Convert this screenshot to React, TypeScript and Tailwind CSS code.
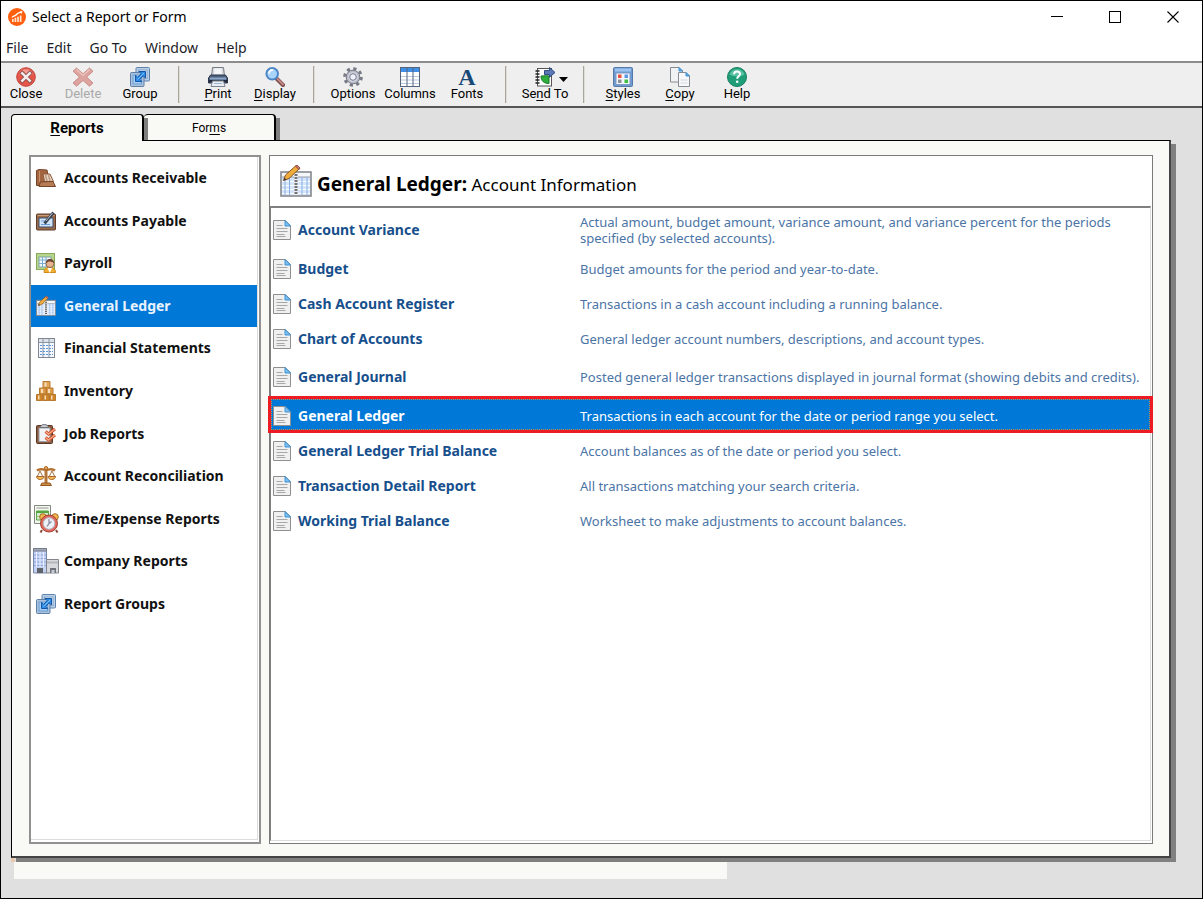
import { useState } from "react";
import type { ReactNode } from "react";
import clsx from "clsx";

interface Tool {
  id: string;
  label: ReactNode;
  icon: ReactNode;
  disabled?: boolean;
  arrow?: boolean;
}

interface Category {
  name: string;
  icon: ReactNode;
}

interface Report {
  name: string;
  description: string;
  tall?: boolean;
}

const u = (letter: string) => <span className="underline underline-offset-2">{letter}</span>;

/* ---------- icons ---------- */

function LogoIcon() {
  return (
    <svg width="18" height="18" viewBox="0 0 18 18" aria-hidden="true">
      <circle cx="9" cy="9" r="9" fill="#ff5f0f" />
      <path d="M4 9.500C5.500 7 7 8.500 8.500 6.500S11 5 13.500 4" fill="none" stroke="#fff" strokeWidth="1.300" />
      <path d="M11.500 3.200L14.500 3.300L13.500 6Z" fill="#fff" />
      <path d="M4 14v-3h1.700v3zM6.600 14v-4.200h1.700V14zM9.200 14V8.800h1.700V14zM11.800 14V7.500h1.700V14z" fill="#ffe3d0" />
    </svg>
  );
}

function CloseIcon() {
  return (
    <svg width="20" height="20" viewBox="0 0 20 20" aria-hidden="true">
      <circle cx="10" cy="10" r="9.300" fill="#e8564a" stroke="#c2453c" />
      <path d="M3 7a7.500 7.500 0 0 1 14 0c-4 2-10 2-14 0z" fill="#f29a8f" />
      <path d="M6.300 6.300l7.400 7.400M13.700 6.300l-7.400 7.400" stroke="#8d4a48" strokeWidth="4.400" strokeLinecap="square" />
      <path d="M6.300 6.300l7.400 7.400M13.700 6.300l-7.400 7.400" stroke="#f3eceb" strokeWidth="2.600" strokeLinecap="square" />
    </svg>
  );
}

function DeleteIcon() {
  return (
    <svg width="22" height="20" viewBox="0 0 22 20" aria-hidden="true">
      <path
        d="M4.500 1L11 6.700L17.500 1L21 4.200L14.600 10L21 16L17.500 19.200L11 13.500L4.500 19.200L1 16L7.400 10L1 4.200Z"
        fill="#dda49f"
        stroke="#c9908b"
      />
      <path d="M4.500 2.500L11 8.200L17.500 2.500" fill="none" stroke="#ebc2be" strokeWidth="1.500" />
    </svg>
  );
}

function GroupIcon() {
  return (
    <svg width="20" height="20" viewBox="0 0 20 20" aria-hidden="true">
      <rect x="6" y="0.500" width="13.500" height="13.500" rx="1" fill="#b9cfe6" stroke="#5f83ad" />
      <rect x="8.500" y="3" width="8.500" height="8.500" fill="#dcebfa" stroke="#86a6ca" />
      <rect x="0.500" y="5.500" width="13.500" height="14" rx="1" fill="#a9c3df" stroke="#5f7fa6" />
      <rect x="3" y="8" width="8.500" height="9" fill="#a5cff6" stroke="#6f9bcb" />
      <path d="M9 4.500h6.500V11l-2.200-2.200-3.500 3.500 2 2.200H5.500V8.200l2.200 2.200 3.500-3.700z" fill="#2f8fe8" stroke="#1556a5" />
      <path d="M7.500 12.500L14 6" stroke="#7cc4ff" />
    </svg>
  );
}

function PrintIcon() {
  return (
    <svg width="20" height="20" viewBox="0 0 20 20" aria-hidden="true">
      <path d="M4.500 0.500h11l1 8.500h-13z" fill="#d6d9dd" stroke="#777b82" />
      <path d="M6.500 1.500h7l.5 6H6z" fill="#f4f5f6" />
      <path d="M2.500 8h15l2 3v5h-19v-5z" fill="#4d5f78" stroke="#2c3850" />
      <path d="M2 10.500h16v2H2z" fill="#8ba7cb" />
      <path d="M0.500 13h19v2.500h-19z" fill="#232c3e" />
      <path d="M4.500 14h11l1.500 5.500H3z" fill="#e9edf2" stroke="#7b8594" />
      <path d="M6 16.500h8" stroke="#9fb7d6" />
    </svg>
  );
}

function DisplayIcon() {
  return (
    <svg width="20" height="20" viewBox="0 0 20 20" aria-hidden="true">
      <path d="M11.500 11.500l6.500 6.500" stroke="#7c4b4b" strokeWidth="4" strokeLinecap="round" />
      <path d="M12.500 12l5.500 5.500" stroke="#c58a86" strokeWidth="1.800" strokeLinecap="round" />
      <circle cx="7.200" cy="6.800" r="5.800" fill="#a9d5fb" stroke="#4f86c6" strokeWidth="2" />
      <path d="M3.800 6.500A3.800 3.800 0 0 1 8 3" fill="none" stroke="#fff" strokeWidth="1.700" />
    </svg>
  );
}

function OptionsIcon() {
  return (
    <svg width="20" height="20" viewBox="0 0 20 20" aria-hidden="true">
      <circle cx="10" cy="10" r="8.300" fill="none" stroke="#777a85" strokeWidth="3" strokeDasharray="3.200 3.320" />
      <circle cx="10" cy="10" r="6.800" fill="#b9bcc8" stroke="#777a85" />
      <circle cx="10" cy="10" r="4.800" fill="#d7d9e4" />
      <circle cx="10" cy="10" r="3.300" fill="#eef0fa" stroke="#74778a" />
    </svg>
  );
}

function ColumnsIcon() {
  return (
    <svg width="20" height="20" viewBox="0 0 20 20" aria-hidden="true">
      <rect x="0.500" y="0.500" width="19" height="19" fill="#fff" stroke="#55657e" />
      <rect x="1" y="1" width="18" height="4" fill="#3f8fe6" />
      <path d="M1 9.500h18M1 13h18M1 16.500h18" stroke="#b9cbe0" />
      <path d="M7 1v18M13 1v18" stroke="#55657e" />
    </svg>
  );
}

function FontsIcon() {
  return (
    <span aria-hidden="true" className="flex h-5 items-center font-['Liberation_Serif',serif] text-[24px] leading-5 font-bold text-[#184a78]">
      A
    </span>
  );
}

function SendToIcon() {
  return (
    <svg width="20" height="20" viewBox="0 0 20 20" aria-hidden="true">
      <rect x="2.500" y="1.500" width="14" height="17.500" fill="#fff" stroke="#555" />
      <path d="M0.500 4h4M0.500 7h4M0.500 10h4M0.500 13h4M0.500 16h4" stroke="#222" strokeWidth="1.600" />
      <path d="M6 9c3 0 5-.5 8 0v7.500C9 16.500 6 14 6 9z" fill="#2fae3e" stroke="#187a28" />
      <path d="M9.500 3.500h5V0.500L20 5.500l-5.500 4.700V7.500h-5z" fill="#5878b6" stroke="#2e4a80" />
    </svg>
  );
}

function StylesIcon() {
  return (
    <svg width="20" height="20" viewBox="0 0 20 20" aria-hidden="true">
      <rect x="0.500" y="0.500" width="19" height="19" rx="1" fill="#6d9ad0" stroke="#5679a8" />
      <rect x="2" y="1.500" width="16" height="3" fill="#9cc3f0" />
      <rect x="3" y="6" width="14" height="11.500" fill="#f3f6fb" stroke="#7d9cc6" />
      <rect x="5" y="7.500" width="3.500" height="3.500" fill="#e8503a" />
      <rect x="11.500" y="7.500" width="3.500" height="3.500" fill="#5b97e6" />
      <rect x="5" y="12.500" width="3.500" height="3.500" fill="#8b8f98" />
      <rect x="11.500" y="12.500" width="3.500" height="3.500" fill="#3fbf3f" />
    </svg>
  );
}

function CopyIcon() {
  return (
    <svg width="20" height="20" viewBox="0 0 20 20" aria-hidden="true">
      <path d="M0.500 0.500h8.500l3.500 3.500v11h-12z" fill="#f1f2f4" stroke="#888c92" />
      <path d="M9 0.500v3.500h3.500z" fill="#5fb2f2" stroke="#3f8fd0" />
      <path d="M8.500 5.500h7.500l3.500 3.500v10.500h-11z" fill="#f7f8fa" stroke="#888c92" />
      <path d="M16 5.500V9h3.500z" fill="#5fb2f2" stroke="#3f8fd0" />
      <path d="M10.500 13h7M10.500 16h7" stroke="#d4d6da" />
    </svg>
  );
}

function HelpIcon() {
  return (
    <svg width="20" height="20" viewBox="0 0 20 20" aria-hidden="true">
      <circle cx="10" cy="10" r="9.500" fill="#1f9e78" stroke="#187d60" />
      <path d="M2.500 7.500a8 8 0 0 1 15 0c-4 2.500-11 2.500-15 0z" fill="#58c3a2" />
      <path d="M7 7.300C7 5.300 8.400 4.500 10 4.500s3 1 3 2.600c0 2.200-2.800 2.300-2.800 4.700" fill="none" stroke="#fff" strokeWidth="2" />
      <circle cx="10.200" cy="14.800" r="1.300" fill="#fff" />
    </svg>
  );
}

function ReceivableIcon() {
  return (
    <svg width="20" height="18" viewBox="0 0 20 18" aria-hidden="true">
      <path d="M0.500 1.500L3 0.500l8 .5 1 5-2 10.500H0.500z" fill="#a5663f" stroke="#75452a" />
      <path d="M3.500 2v11" stroke="#c9936d" />
      <path d="M7 5h7l3.500 7.500h-9z" fill="#e9d2bd" stroke="#8a5a3c" />
      <path d="M9 7h1.500M12 7h1.500M9.500 9h1.500M12.500 9h1.500M10 11h1.500M13 11h1.500" stroke="#8a5f45" />
      <path d="M4.500 13L17 12.500l2.500 5H3z" fill="#b97d55" stroke="#75452a" />
    </svg>
  );
}

function PayableIcon() {
  return (
    <svg width="20" height="20" viewBox="0 0 20 20" aria-hidden="true">
      <rect x="0.500" y="3" width="19" height="16" rx="1" fill="#9a6a4b" stroke="#5f3d2a" />
      <path d="M1.500 4.500h17" stroke="#c99c7c" />
      <rect x="3" y="7" width="14" height="9" fill="#d3e4f9" stroke="#39506f" />
      <path d="M5 10h4M5 13.500h9" stroke="#6b9be0" />
      <path d="M8.500 12.500L17.500 1.500" stroke="#3a4554" strokeWidth="2.800" />
      <path d="M10 10L16.500 2" stroke="#b4bfce" />
    </svg>
  );
}

function PayrollIcon() {
  return (
    <svg width="20" height="20" viewBox="0 0 20 20" aria-hidden="true">
      <rect x="0.500" y="0.500" width="18" height="16" fill="#b8d58c" stroke="#86a95c" />
      <rect x="3" y="4" width="12" height="10" fill="#f0f7ff" stroke="#7fa3a0" />
      <path d="M3 7h12M3 10.500h12M6.500 4v10M10 4v10" stroke="#7eaed0" />
      <path d="M8 19.500c0-4 2.500-5 5.500-5s6 1 6 5z" fill="#f2ae2e" stroke="#cf8a1c" />
      <path d="M11.500 15l2.300 5 2.200-5z" fill="#fff" />
      <circle cx="14" cy="10.500" r="4" fill="#e8b48f" stroke="#96684a" />
      <path d="M9.800 10.500c0-6 8.400-6 8.400 0-1.500-2.500-6-3-8.400 0z" fill="#6d4433" />
    </svg>
  );
}

function LedgerIcon({ size = 20 }: { size?: number }) {
  return (
    <svg width={size} height={size} viewBox="0 0 32 32" aria-hidden="true">
      <rect x="1" y="7" width="30" height="24" fill="#f5f6f8" stroke="#85888f" strokeWidth="1.600" />
      <path d="M2 12h12v18H2zM18 12h12v18H18z" fill="#d3e4fb" />
      <path d="M2 12h28" stroke="#999da5" />
      <path d="M2 16.500h28M2 20.500h28M2 24.500h28M2 28.500h28" stroke="#fff" />
      <path d="M5 12v18M9.500 12v18M22 12v18M27 12v18" stroke="#86aee2" />
      <rect x="14" y="8" width="4" height="22" fill="#eceef0" />
      <path d="M14.500 10h3M14.500 13h3M14.500 16h3M14.500 19h3M14.500 22h3M14.500 25h3M14.500 28h3" stroke="#4a4c52" strokeWidth="1.600" />
      <path d="M3.500 15.500L5.500 10 15.500 1l3.500 3L9 13.500z" fill="#f0ab3d" stroke="#875620" />
      <path d="M15.500 1L17 0l3 3-1 1.500z" fill="#e4807a" stroke="#8c4c46" />
      <path d="M3.500 15.500l1-2.800 1.800 1.700z" fill="#333" />
    </svg>
  );
}

function StatementsIcon() {
  return (
    <svg width="17" height="20" viewBox="0 0 17 20" aria-hidden="true">
      <rect x="0.500" y="0.500" width="16" height="19" fill="#f4f8fd" stroke="#7f8794" />
      <path d="M1 1h15v3H1z" fill="#dde0e5" />
      <path d="M1 4.500h15M5 1v18M11 1v18" stroke="#8a95a6" />
      <path d="M2 7.500h13M2 10.500h13M2 13.500h13M2 16.500h13" stroke="#5f94d4" strokeDasharray="2 1" />
    </svg>
  );
}

function InventoryIcon() {
  return (
    <svg width="20" height="20" viewBox="0 0 20 20" aria-hidden="true">
      <g stroke="#b8782d">
        <path d="M7 0.500h7v6.500H7z" fill="#e0a75a" />
        <path d="M3.500 7h6.500v6H3.500zM10.500 7H17v6h-6.500z" fill="#dd9c48" />
        <path d="M0.500 13.500h6v6h-6zM7 13.500h6v6H7zM13.500 13.500h6v6h-6z" fill="#cf8527" />
      </g>
      <path d="M8.500 1.500h2v4h-2zM5 8h2v4H5zM12 8h2v4h-2zM2 14.500h1.500v4H2zM8.500 14.500H10v4H8.500zM15 14.500h1.500v4H15z" fill="#f6ddb8" />
    </svg>
  );
}

function JobIcon() {
  return (
    <svg width="20" height="20" viewBox="0 0 20 20" aria-hidden="true">
      <rect x="0.500" y="1.500" width="16" height="18" rx="1" fill="#8a5a40" stroke="#5b3826" />
      <path d="M3 4h11v13.500H3z" fill="#f2f3f5" stroke="#9b9fa6" />
      <path d="M4.500 3.500c0-2 1.500-3 3.800-3s4 1 4 3z" fill="#c9ccd2" stroke="#6e7279" />
      <g fill="none" stroke="#c94a26" strokeWidth="3">
        <path d="M9.500 7.500l3 2.500 6.500-5" />
        <path d="M9.500 13.500l3 2.500 6.500-5" />
      </g>
      <g fill="none" stroke="#f8a988" strokeWidth="1.400">
        <path d="M9.500 7.500l3 2.500 6.500-5" />
        <path d="M9.500 13.500l3 2.500 6.500-5" />
      </g>
    </svg>
  );
}

function ScalesIcon() {
  return (
    <svg width="20" height="20" viewBox="0 0 20 20" aria-hidden="true">
      <path d="M10 1v16" stroke="#b5743a" strokeWidth="3" />
      <path d="M1 4.500c4-3 6 0 9-1 3 1 5-2 9 1" fill="none" stroke="#b5702d" strokeWidth="2.400" />
      <path d="M4 5l-3 6M4 5l3 6M16 5l-3 6M16 5l3 6" stroke="#9e7448" />
      <path d="M0.500 10.500h7.500c0 4-7.500 4-7.500 0zM12 10.500h7.500c0 4-7.500 4-7.500 0z" fill="#f4b955" stroke="#a8672a" />
      <circle cx="10" cy="2.200" r="1.700" fill="#e7a650" stroke="#a8672a" />
      <path d="M6 17h8l1.500 2.500h-11z" fill="#cf8e45" stroke="#93571f" />
    </svg>
  );
}

function TimeIcon() {
  return (
    <svg width="26" height="28" viewBox="0 0 26 28" aria-hidden="true">
      <path d="M1.500 0.500h16v18h-16z" fill="#f5f7f3" stroke="#82897f" />
      <path d="M3.500 3h12" stroke="#b3b8b0" strokeWidth="1.500" />
      <path d="M3.500 6h12v9h-12z" fill="#d6ecd0" stroke="#57a540" />
      <path d="M3.500 6h12v2h-12z" fill="#57a540" />
      <path d="M3.500 11.500h12M8 8v7" stroke="#8cc97b" />
      <circle cx="10" cy="12" r="3.300" fill="#f3b94c" stroke="#a86d24" />
      <circle cx="22" cy="12" r="3.300" fill="#f3b94c" stroke="#a86d24" />
      <path d="M9 25l-1.500 2.500M23 25l1.500 2.500" stroke="#8a4a3a" strokeWidth="2" />
      <circle cx="16" cy="18.500" r="8.500" fill="#e0685a" stroke="#a33f34" />
      <circle cx="16" cy="18.500" r="5.800" fill="#eef0f8" stroke="#b6b8c8" />
      <path d="M16 14v4.500l-2 3M16 18.500l2.500-2" fill="none" stroke="#8a8da3" strokeWidth="1.300" />
    </svg>
  );
}

function CompanyIcon() {
  return (
    <svg width="26" height="26" viewBox="0 0 26 26" aria-hidden="true">
      <path d="M0.500 0.500h13v24.500H0.500z" fill="#c3d2f2" stroke="#7886a8" />
      <path d="M0.500 0.500h13v2.500H0.500z" fill="#a3a9b6" stroke="#747b8a" />
      <path d="M1 7h12M1 10.500h12M1 14h12M1 17.500h12" stroke="#8fa4dc" />
      <path d="M3.500 4v15M7 4v15M10.500 4v15" stroke="#e9effc" />
      <path d="M4 20h6v5H4z" fill="#61636b" />
      <path d="M13.500 11.500h12V25h-12z" fill="#d8d9dd" stroke="#82858c" />
      <path d="M14 14.500h11" stroke="#b4b6bc" strokeWidth="2" />
      <path d="M17 20h6v5h-6z" fill="#70727a" />
      <path d="M18.500 22h3v3h-3z" fill="#c4cbd9" />
    </svg>
  );
}

function DocumentIcon() {
  return (
    <svg width="18" height="20" viewBox="0 0 18 20" className="shrink-0" aria-hidden="true">
      <path d="M0.500 0.500h12l5 5v14H0.500z" fill="#f0f0f0" stroke="#8f8f8f" />
      <path d="M12 0.500v5.500h5.500z" fill="#7cc0f2" stroke="#3f93d6" />
      <path d="M3.500 5.500h6M3.500 8.500h11M3.500 11.500h11M3.500 14.500h8M3.500 16.500h9" stroke="#a8a8a8" />
    </svg>
  );
}

/* ---------- data ---------- */

const toolGroups: Tool[][] = [
  [
    { id: "close", label: "Close", icon: <CloseIcon /> },
    { id: "delete", label: "Delete", icon: <DeleteIcon />, disabled: true },
    { id: "group", label: "Group", icon: <GroupIcon /> },
  ],
  [
    { id: "print", label: <>{u("P")}rint</>, icon: <PrintIcon /> },
    { id: "display", label: <>{u("D")}isplay</>, icon: <DisplayIcon /> },
  ],
  [
    { id: "options", label: "Options", icon: <OptionsIcon /> },
    { id: "columns", label: "Columns", icon: <ColumnsIcon /> },
    { id: "fonts", label: "Fonts", icon: <FontsIcon /> },
  ],
  [{ id: "send", label: <>Se{u("n")}d To</>, icon: <SendToIcon />, arrow: true }],
  [
    { id: "styles", label: <>{u("S")}tyles</>, icon: <StylesIcon /> },
    { id: "copy", label: <>{u("C")}opy</>, icon: <CopyIcon /> },
    { id: "help", label: "Help", icon: <HelpIcon /> },
  ],
];

const categories: Category[] = [
  { name: "Accounts Receivable", icon: <ReceivableIcon /> },
  { name: "Accounts Payable", icon: <PayableIcon /> },
  { name: "Payroll", icon: <PayrollIcon /> },
  { name: "General Ledger", icon: <LedgerIcon /> },
  { name: "Financial Statements", icon: <StatementsIcon /> },
  { name: "Inventory", icon: <InventoryIcon /> },
  { name: "Job Reports", icon: <JobIcon /> },
  { name: "Account Reconciliation", icon: <ScalesIcon /> },
  { name: "Time/Expense Reports", icon: <TimeIcon /> },
  { name: "Company Reports", icon: <CompanyIcon /> },
  { name: "Report Groups", icon: <GroupIcon /> },
];

const reports: Report[] = [
  {
    name: "Account Variance",
    description:
      "Actual amount, budget amount, variance amount, and variance percent for the periods specified (by selected accounts).",
    tall: true,
  },
  { name: "Budget", description: "Budget amounts for the period and year-to-date." },
  { name: "Cash Account Register", description: "Transactions in a cash account including a running balance." },
  { name: "Chart of Accounts", description: "General ledger account numbers, descriptions, and account types." },
  {
    name: "General Journal",
    description: "Posted general ledger transactions displayed in journal format (showing debits and credits).",
    tall: true,
  },
  { name: "General Ledger", description: "Transactions in each account for the date or period range you select." },
  { name: "General Ledger Trial Balance", description: "Account balances as of the date or period you select." },
  { name: "Transaction Detail Report", description: "All transactions matching your search criteria." },
  { name: "Working Trial Balance", description: "Worksheet to make adjustments to account balances." },
];

/* ---------- page ---------- */

function TitleBar() {
  return (
    <header className="flex h-[31px] items-center bg-white pl-[7px]">
      <LogoIcon />
      <h1 className="ml-1.5 flex-1 text-[14px] leading-5 text-black">Select a Report or Form</h1>
      <button aria-label="Minimize" className="flex h-full w-[58px] items-center justify-center">
        <svg width="12" height="12" viewBox="0 0 12 12" shapeRendering="crispEdges">
          <path d="M0 5.500h12" stroke="#000" />
        </svg>
      </button>
      <button aria-label="Maximize" className="flex h-full w-[58px] items-center justify-center">
        <svg width="12" height="12" viewBox="0 0 12 12" shapeRendering="crispEdges">
          <rect x="0.500" y="0.500" width="11" height="11" fill="none" stroke="#000" />
        </svg>
      </button>
      <button aria-label="Close window" className="flex h-full w-[58px] items-center justify-center">
        <svg width="12" height="12" viewBox="0 0 12 12">
          <path d="M0.500 0.500l11 11M11.500 0.500l-11 11" stroke="#000" strokeWidth="1.100" />
        </svg>
      </button>
    </header>
  );
}

function Toolbar() {
  return (
    <div role="toolbar" className="flex h-[47px] border-t-2 border-b-2 border-t-[#8c8c8c] border-b-[#555] bg-[#efefef]">
      {toolGroups.map((group, i) => (
        <div key={i} className="flex">
          {i > 0 && <div className="mx-[13px] my-[3px] w-[2px] border-l border-[#a8a59c] bg-[#e0ddd6]" />}
          <div className="flex gap-[7px]">
            {group.map((tool) => (
              <button
                key={tool.id}
                disabled={tool.disabled}
                className={clsx(
                  "flex w-[50px] flex-col items-center pt-1 font-[Roboto,sans-serif] text-[13px] leading-[14px] whitespace-nowrap",
                  tool.disabled ? "text-[#a9a9a9]" : "text-black"
                )}
              >
                <span className="relative">
                  {tool.icon}
                  {tool.arrow && (
                    <svg width="9" height="5" viewBox="0 0 9 5" className="absolute top-2.5 left-6" aria-hidden="true">
                      <path d="M0 0h9L4.500 5z" fill="#000" />
                    </svg>
                  )}
                </span>
                <span>{tool.label}</span>
              </button>
            ))}
          </div>
        </div>
      ))}
    </div>
  );
}

function ReportRow({ report, selected, onSelect }: { report: Report; selected: boolean; onSelect: () => void }) {
  return (
    <tr
      onClick={onSelect}
      className={clsx(
        "relative",
        report.tall ? "h-[42px]" : "h-[35px]",
        selected ? "bg-[#0078d7] text-white" : "text-[#4b74a6]"
      )}
    >
      <td className="p-0 pl-0.5">
        {selected && (
          <span className="pointer-events-none absolute -inset-x-[3px] -top-0.5 bottom-0 border-3 border-[#ed1c24]">
            <span className="block h-full border border-dotted border-[#c98a4a]" />
          </span>
        )}
        <button
          className={clsx(
            "flex items-center gap-[7px] text-left text-[14px] leading-5 font-bold whitespace-nowrap",
            selected ? "text-white" : "text-[#164f8c]"
          )}
        >
          <DocumentIcon />
          {report.name}
        </button>
      </td>
      <td className="p-0 pr-1 text-[13px] leading-4">{report.description}</td>
    </tr>
  );
}

export default function App() {
  const [tab, setTab] = useState("reports");
  const [category, setCategory] = useState("General Ledger");
  const [selectedReport, setSelectedReport] = useState("General Ledger");

  return (
    <div className="flex min-h-screen flex-col border border-black bg-[#e0e0e0] font-['Noto_Sans',sans-serif]">
      <TitleBar />

      {/* menu bar */}
      <nav className="flex h-[29px] gap-[18px] bg-white pt-[6px] pl-[5px] text-[14px] leading-5 text-[#1c1c28]">
        {["File", "Edit", "Go To", "Window", "Help"].map((item) => (
          <button key={item} className="flex">
            {item}
          </button>
        ))}
      </nav>

      <Toolbar />

      <main className="flex flex-1 flex-col pt-[6px] pr-[31px] pb-[19px] pl-[10px]">
        {/* tabs */}
        <div role="tablist" className="flex h-[26px] font-[Roboto,sans-serif] text-black">
          <button
            role="tab"
            aria-selected={tab === "reports"}
            onClick={() => setTab("reports")}
            className="relative z-10 h-[27px] w-[133px] rounded-t-[4px] border-t border-r-2 border-l border-black bg-[#f9faf5] text-[15px] leading-5 font-bold"
          >
            {u("R")}eports
          </button>
          <div className="z-10 mt-1 w-1 bg-[#7f7f7f]" />
          <button
            role="tab"
            aria-selected={tab === "forms"}
            onClick={() => setTab("forms")}
            className="-ml-1 w-[132px] rounded-t-[4px] border-t border-r-2 border-black bg-[#f9faf5] text-[12px] leading-5"
          >
            For{u("m")}s
          </button>
          <div className="mt-1 w-1 bg-[#7f7f7f]" />
        </div>

        {/* page of the open tab */}
        <div className="flex flex-1 gap-2 border-t border-r-2 border-b-2 border-l border-t-black border-r-[#444] border-b-[#444] border-l-black bg-[#f9faf5] pt-[14px] pr-4 pb-3 pl-[17px] shadow-[5px_4px_0_#808080]">
          {/* categories */}
          <aside className="flex w-[232px] shrink-0 border-2 border-[#919191] bg-white pr-px pb-[2px]">
            <div className="flex-1 border-r border-b border-[#dcdcdc]">
              <ul className="grid h-[468px] grid-rows-11">
                {categories.map((item) => (
                  <li key={item.name} className="grid">
                    <button
                      onClick={() => setCategory(item.name)}
                      className={clsx(
                        "flex items-center gap-1 pl-px text-left text-[14px] leading-5 font-bold",
                        category === item.name ? "bg-[#0078d7] text-[#e9f3fc]" : "text-[#111]"
                      )}
                    >
                      <span className="flex w-7 justify-center">{item.icon}</span>
                      {item.name}
                    </button>
                  </li>
                ))}
              </ul>
            </div>
          </aside>

          {/* reports of the category */}
          <section className="flex min-w-0 flex-1 flex-col border border-[#7a7a7a] bg-white pr-px pb-[2px]">
            <div className="flex h-[50px] items-end gap-[5px] pb-[9px] pl-[10px]">
              <LedgerIcon size={32} />
              <h2 className="text-[17px] leading-6 text-black">
                <span className="text-[19px] font-bold">General Ledger:</span> Account Information
              </h2>
            </div>
            <div className="flex-1 border-t-2 border-r border-b border-l border-t-[#808080] border-r-[#dcdcdc] border-b-[#dcdcdc] border-l-[#808080] pt-px">
              <table className="w-full table-fixed border-collapse">
                <colgroup>
                  <col className="w-[309px]" />
                  <col />
                </colgroup>
                <tbody>
                  {reports.map((report) => (
                    <ReportRow
                      key={report.name}
                      report={report}
                      selected={selectedReport === report.name}
                      onSelect={() => setSelectedReport(report.name)}
                    />
                  ))}
                </tbody>
              </table>
            </div>
          </section>
        </div>

        {/* status strip under the page */}
        <div className="h-1 w-1 bg-[#e8cbae]" />
        <div className="ml-[3px] h-[17px] w-[713px] max-w-full bg-[#f9faf5]" />
      </main>
    </div>
  );
}
